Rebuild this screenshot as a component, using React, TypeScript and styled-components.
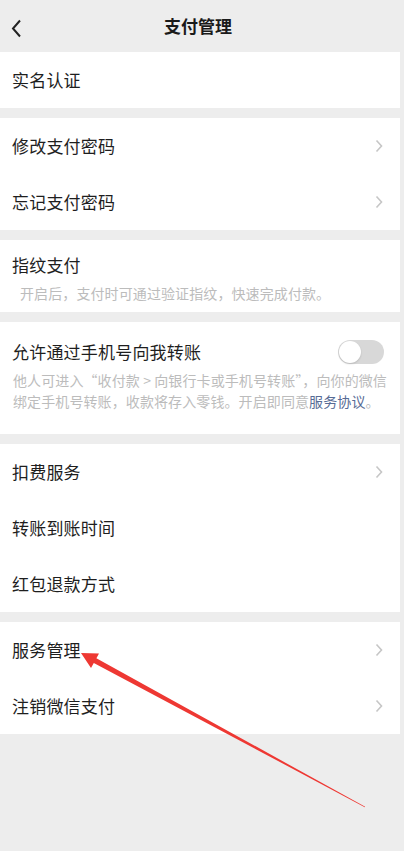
import React from "react";
import styled, { createGlobalStyle } from "styled-components";

const GlobalStyle = createGlobalStyle`
  html, body {
    margin: 0;
    padding: 0;
    background: #ededed;
  }
  body {
    font-family: "Noto Sans CJK SC", "Noto Sans", sans-serif;
    -webkit-font-smoothing: antialiased;
  }
`;

const Page = styled.div`
  position: relative;
  width: 404px;
  min-height: 851px;
  background: #ededed;
  overflow: hidden;
`;

const Header = styled.header`
  height: 52px;
  display: flex;
  align-items: center;
  justify-content: center;
  position: relative;
  color: #1a1a1a;
`;

const BackButton = styled.span`
  position: absolute;
  left: 11px;
  top: 19px;
  display: flex;
`;

const Title = styled.h1`
  margin: 0 0 0 -8px;
  font-size: 17px;
  font-weight: 700;
  line-height: 24px;
`;

const Sections = styled.div`
  display: flex;
  flex-direction: column;
  gap: 10px;
  padding-right: 4px;
`;

const Card = styled.section`
  background: #fff;
  display: flex;
  flex-direction: column;
`;

const Row = styled.div`
  height: 56px;
  display: flex;
  align-items: center;
  justify-content: space-between;
  padding: 0 17px 0 12px;
`;

const Label = styled.span`
  font-size: 17px;
  line-height: 24px;
  color: #1e1e1e;
  letter-spacing: 0.2px;
`;

const Block = styled.div<{ $top: number; $bottom: number }>`
  padding: ${(p) => p.$top}px 16px ${(p) => p.$bottom}px 12px;
`;

const BlockHead = styled.div`
  display: flex;
  align-items: center;
  justify-content: space-between;
`;

const Note = styled.p<{ $indent: number }>`
  margin: 6px 0 0;
  padding-left: ${(p) => p.$indent}px;
  font-size: 14px;
  line-height: 21px;
  letter-spacing: 0.1px;
  color: #bcbcbc;
  white-space: nowrap;
`;

const NoteLine = styled.span`
  display: block;
`;

const Link = styled.span`
  color: #576b95;
`;

const Toggle = styled.span`
  width: 46px;
  height: 24px;
  border-radius: 12px;
  background: #d8d8d8;
  display: flex;
  align-items: center;
  padding: 1px;
  box-sizing: border-box;
  margin-right: 0;
`;

const Knob = styled.span`
  width: 22px;
  height: 22px;
  border-radius: 50%;
  background: #fff;
  box-shadow: 0 1px 2px rgba(0, 0, 0, 0.15);
`;

const Arrow = styled.svg`
  position: absolute;
  left: 0;
  top: 0;
  pointer-events: none;
`;

const Chevron = () => (
  <svg width="8" height="14" viewBox="0 0 8 14">
    <polyline
      points="1.5,1.5 6.5,7 1.5,12.5"
      fill="none"
      stroke="#c6c6c6"
      strokeWidth="1.6"
    />
  </svg>
);

const Item: React.FC<{ label: string; more?: boolean }> = ({ label, more }) => (
  <Row>
    <Label>{label}</Label>
    {more && <Chevron />}
  </Row>
);

export default function App() {
  return (
    <Page>
      <GlobalStyle />
      <Header>
        <BackButton>
          <svg width="11" height="19" viewBox="0 0 11 19">
            <polyline
              points="9,1.5 2,9.5 9,17.5"
              fill="none"
              stroke="#222"
              strokeWidth="2"
            />
          </svg>
        </BackButton>
        <Title>支付管理</Title>
      </Header>

      <Sections>
        <Card>
          <Item label="实名认证" />
        </Card>

        <Card>
          <Item label="修改支付密码" more />
          <Item label="忘记支付密码" more />
        </Card>

        <Card>
          <Block $top={13} $bottom={8}>
            <Label>指纹支付</Label>
            <Note $indent={8}>开启后，支付时可通过验证指纹，快速完成付款。</Note>
          </Block>
        </Card>

        <Card>
          <Block $top={18} $bottom={22}>
            <BlockHead>
              <Label>允许通过手机号向我转账</Label>
              <Toggle>
                <Knob />
              </Toggle>
            </BlockHead>
            <Note $indent={1}>
              <NoteLine>他人可进入“收付款 &gt; 向银行卡或手机号转账”，向你的微信</NoteLine>
              <NoteLine>
                绑定手机号转账，收款将存入零钱。开启即同意<Link>服务协议</Link>。
              </NoteLine>
            </Note>
          </Block>
        </Card>

        <Card>
          <Item label="扣费服务" more />
          <Item label="转账到账时间" />
          <Item label="红包退款方式" />
        </Card>

        <Card>
          <Item label="服务管理" more />
          <Item label="注销微信支付" more />
        </Card>
      </Sections>

      <Arrow width="404" height="851" viewBox="0 0 404 851">
        <polygon
          points="81,653 99,653.5 96.4,658.3 365.2,806.8 364.8,807.2 93.8,662.9 91,668"
          fill="#ee3833"
        />
      </Arrow>
    </Page>
  );
}
